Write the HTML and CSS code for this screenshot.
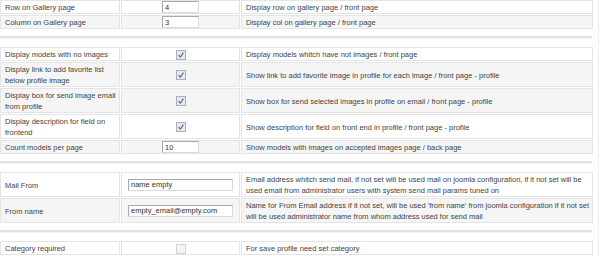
FILE: index.html
```html
<!DOCTYPE html>
<html lang="en">
  <head>
    <meta charset="UTF-8" />
    <meta name="viewport" content="width=device-width, initial-scale=1.0" />
    <title>Gallery Settings</title>
    <link rel="stylesheet" href="styles.css">
  </head>
  <body>
    <div class="settings">
      <!-- Gallery layout -->
      <table class="admintable">
        <tr>
          <td class="key">Row on Gallery page</td>
          <td class="field"><input type="text" class="inputbox short" value="4" /></td>
          <td class="desc">Display row on gallery page / front page</td>
        </tr>
        <tr class="row1">
          <td class="key">Column on Gallery page</td>
          <td class="field"><input type="text" class="inputbox short" value="3" /></td>
          <td class="desc">Display col on gallery page / front page</td>
        </tr>
      </table>

      <div class="separator"></div>

      <!-- Front page options -->
      <table class="admintable">
        <tr>
          <td class="key">Display models with no images</td>
          <td class="field"><span class="checkbox checked"><svg viewBox="0 0 10 10" width="10" height="10"><path d="M2.6 5.2 L4.3 7.2 L7.4 2.6" fill="none" stroke="#56647c" stroke-width="1.1"/></svg></span></td>
          <td class="desc">Display models whitch have not images / front page</td>
        </tr>
        <tr class="row1">
          <td class="key">Display link to add favorite list below profile image</td>
          <td class="field"><span class="checkbox checked"><svg viewBox="0 0 10 10" width="10" height="10"><path d="M2.6 5.2 L4.3 7.2 L7.4 2.6" fill="none" stroke="#56647c" stroke-width="1.1"/></svg></span></td>
          <td class="desc">Show link to add favorite image in profile for each image / front page - profile</td>
        </tr>
        <tr class="row1">
          <td class="key">Display box for send image email from profile</td>
          <td class="field"><span class="checkbox checked"><svg viewBox="0 0 10 10" width="10" height="10"><path d="M2.6 5.2 L4.3 7.2 L7.4 2.6" fill="none" stroke="#56647c" stroke-width="1.1"/></svg></span></td>
          <td class="desc">Show box for send selected images in profile on email / front page - profile</td>
        </tr>
        <tr>
          <td class="key">Display description for field on frontend</td>
          <td class="field"><span class="checkbox checked"><svg viewBox="0 0 10 10" width="10" height="10"><path d="M2.6 5.2 L4.3 7.2 L7.4 2.6" fill="none" stroke="#56647c" stroke-width="1.1"/></svg></span></td>
          <td class="desc">Show description for field on front end in profile / front page - profile</td>
        </tr>
        <tr class="row1">
          <td class="key">Count models per page</td>
          <td class="field"><input type="text" class="inputbox short" value="10" /></td>
          <td class="desc">Show models with images on accepted images page / back page</td>
        </tr>
      </table>

      <div class="separator"></div>

      <!-- Mail options -->
      <table class="admintable">
        <tr>
          <td class="key">Mail From</td>
          <td class="field"><input type="text" class="inputbox wide" value="name empty" /></td>
          <td class="desc">Email address whitch send mail, if not set will be used mail on joomla configuration, if it not set will be used email from administrator users with system send mail params tuned on</td>
        </tr>
        <tr class="row1">
          <td class="key">From name</td>
          <td class="field"><input type="text" class="inputbox wide" value="empty_email@empty.com" /></td>
          <td class="desc">Name for From Email address if it not set, will be used 'from name' from joomla configuration if it not set will be used administrator name from whom address used for send mail</td>
        </tr>
      </table>

      <div class="separator"></div>

      <!-- Profile options -->
      <table class="admintable">
        <tr>
          <td class="key">Category required</td>
          <td class="field"><span class="checkbox"></span></td>
          <td class="desc">For save profile need set category</td>
        </tr>
      </table>
    </div>
  </body>
</html>
```

FILE: styles.css
```css
body {
  margin: 0;
  font-family: "Liberation Sans", Arial, sans-serif;
  font-size: 7.5px;
  color: #434343;
  background-color: #fff;
}
.settings {
  width: 599px;
  margin: -1px 0 0 -1px;
  border-right: 1px solid #f0f0f0;
}
.admintable {
  width: 595px;
  table-layout: fixed;
  border-collapse: separate;
  border-spacing: 1px;
}
.admintable td {
  box-sizing: border-box;
  border: 1px solid #e4e4e4;
  padding: 1px 1px 0 4px;
  line-height: 11px;
  vertical-align: middle;
}
.admintable tr.row1 td {
  background-color: #f5f5f5;
}
.key {
  width: 120px;
}
.field {
  width: 119px;
  text-align: center;
}
.admintable td.field {
  padding: 0 4px;
}
.inputbox {
  box-sizing: border-box;
  height: 12px;
  margin: 0;
  padding: 0 2px;
  font-family: "Liberation Sans", Arial, sans-serif;
  font-size: 7.5px;
  color: #333;
  background-color: #fff;
  border: 1px solid;
  border-color: #a9a9a9 #dadada #dadada #a9a9a9;
  vertical-align: middle;
}
.short {
  width: 37px;
}
.wide {
  width: 105px;
}
.checkbox {
  display: inline-block;
  box-sizing: border-box;
  width: 10px;
  height: 10px;
  border: 1px solid #cfd2d8;
  background-color: #f4f4f4;
  vertical-align: middle;
}
.checkbox.checked {
  border-color: #a8afbd;
  background-color: #e6e9ef;
}
.checkbox svg {
  display: block;
  margin: -1px;
}
.separator {
  width: 592px;
  height: 2px;
  margin: 6px 0 7px 1px;
  background-color: #e2e2e2;
  border-bottom: 1px solid #f2f2f2;
}
```
